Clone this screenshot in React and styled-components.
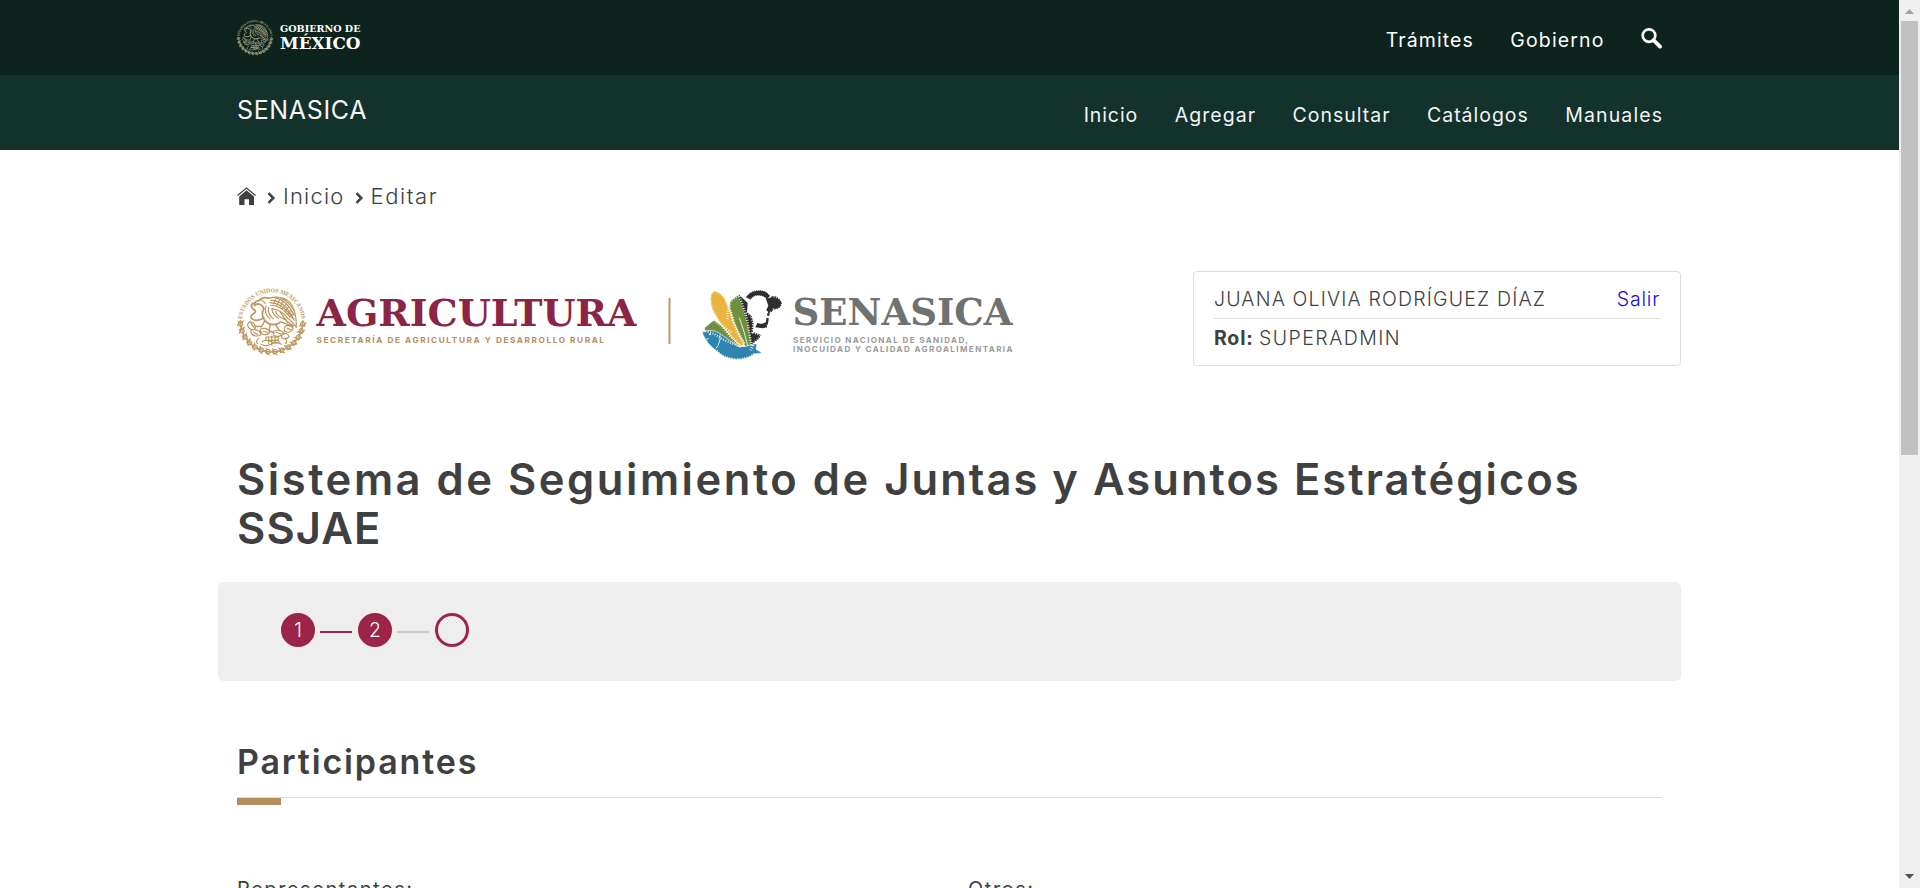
import React from 'react';
import styled, { createGlobalStyle } from 'styled-components';

const Global = createGlobalStyle`
  * { box-sizing: border-box; }
  body {
    margin: 0;
    overflow: hidden;
    background: #fff;
    color: #404041;
    font-family: Inter, "Open Sans", sans-serif;
  }
`;

const Window = styled.div`
  display: flex;
  height: 888px;
  overflow: hidden;
`;

const Page = styled.div`
  flex: 1;
  overflow: hidden;
`;

const Container = styled.div`
  width: 1463px;
  margin: 0 auto;
  padding: 0 19px;
`;

const Bar = styled.div`
  height: 75px;
  background: ${(p) => p.$bg};
`;

const BarContent = styled(Container)`
  display: flex;
  align-items: flex-start;
  justify-content: space-between;
`;

const Nav = styled.nav`
  display: flex;
  gap: 37.5px;
  line-height: 80px;
`;

const NavLink = styled.a`
  font-size: 19.5px;
  color: ${(p) => p.$color || '#fff'};
  letter-spacing: ${(p) => p.$track}px;
  margin-right: ${(p) => -p.$track}px;
`;

const SearchButton = styled.span`
  display: flex;
  padding-top: 27px;
  svg { display: block; }
`;

const Brand = styled.div`
  font-size: 25px;
  line-height: 70px;
  letter-spacing: 0.65px;
  color: #f4f6f5;
`;

const GobLogo = styled.svg`
  display: block;
  margin: 17px 0 0 -2px;
`;

const Breadcrumb = styled.div`
  display: flex;
  height: 92px;
  padding-top: 36px;
  line-height: 20px;
  font-size: 22px;
  font-weight: 300;
`;

const Crumb = styled.span`
  display: flex;
  letter-spacing: ${(p) => p.$track}px;
  svg { display: block; margin: 6px 7px 0 10px; }
`;

const HomeIcon = styled.svg`
  display: block;
  margin: 1px 1px 0 0;
`;

const Banner = styled.div`
  display: flex;
  justify-content: space-between;
  margin: 29px -19px 0 0;
  height: 95px;
`;

const Logos = styled.svg`
  display: block;
  margin-left: -7px;
`;

const UserCard = styled.div`
  width: 488px;
  height: 95px;
  padding: 8px 20px;
  border: 1px solid #ddd;
  border-radius: 4px;
  font-size: 19.5px;
  font-weight: 300;
`;

const UserRow = styled.div`
  display: flex;
  justify-content: space-between;
  line-height: 38px;
  height: 39px;
  border-bottom: ${(p) => (p.$line ? '1px solid #ddd' : 'none')};
`;

const Tracked = styled.span`
  letter-spacing: ${(p) => p.$track}px;
`;

const Strong = styled.b`
  font-weight: 700;
  letter-spacing: 0.8px;
`;

const Logout = styled.a`
  color: #0b0bd8;
  letter-spacing: 0.8px;
`;

const Title = styled.h1`
  margin: 88.5px 0 28.5px;
  font-size: 43.5px;
  line-height: 49.5px;
  font-weight: 600;
  white-space: nowrap;
`;

const Acronym = styled.span`
  display: block;
  letter-spacing: 1.1px;
`;

const Stepper = styled.div`
  display: flex;
  align-items: flex-start;
  height: 99px;
  margin: 0 -19px;
  padding: 31px 63px;
  background: #eee;
  border-radius: 6px;
`;

const Step = styled.span`
  display: flex;
  align-items: center;
  justify-content: center;
  width: 34px;
  height: 34px;
  border: 3px solid #9d2449;
  border-radius: 50%;
  background: ${(p) => (p.$done ? '#9d2449' : '#eee')};
  color: #fff;
  font-size: 19.5px;
  font-weight: 300;
`;

const StepLine = styled.span`
  width: 32px;
  height: 2px;
  margin: 18px 6px 0 5px;
  background: ${(p) => (p.$done ? '#9d2449' : '#ccc')};
`;

const SectionTitle = styled.h2`
  position: relative;
  margin: 60.5px 0 0;
  height: 56.5px;
  line-height: 40px;
  font-size: 34px;
  font-weight: 600;
  letter-spacing: 1.85px;
  border-bottom: 1px solid #ddd;
  &::after {
    content: '';
    position: absolute;
    left: 0;
    top: 56.5px;
    width: 44px;
    height: 7px;
    background: #b38e5d;
  }
`;

const Columns = styled.div`
  display: grid;
  grid-template-columns: 731px 1fr;
  margin-top: 77px;
`;

const Label = styled.label`
  font-size: 20px;
  line-height: 28px;
  letter-spacing: 1.55px;
`;

const Scrollbar = styled.div`
  display: flex;
  flex-direction: column;
  width: 21px;
  background: #f0f0f0;
`;

const Thumb = styled.div`
  height: 434px;
  width: 17px;
  margin: 0 2px auto;
  background: #c1c1c1;
`;

const Arrow = styled.svg`
  display: block;
  flex: none;
`;

const leaves = Array.from({ length: 14 }, (_, i) => 6 + i * 12.9);

/* National coat of arms, 240 units wide */
function Seal({ color, id }) {
  return (
    <g fill="none" stroke={color}>
      <path id={id} d="M33 124 A88 88 0 1 1 209 124" stroke="none" />
      <text fill={color} stroke="none" fontFamily="Liberation Serif" fontWeight="700" fontSize="17">
        <textPath href={`#${id}`} startOffset="50%" textAnchor="middle">ESTADOS UNIDOS MEXICANOS</textPath>
      </text>
      {leaves.map((a) => (
        <g key={a} transform={`rotate(${a} 121 119)`} strokeWidth="3.4">
          <path d="M212 110 q11 9 0 19 q-11 -9 0 -19z M202 128 q6 -8 17 -3 M222 114 q-5 8 -4 13 M212 114 v11" />
        </g>
      ))}
      <g strokeWidth="3.4" strokeLinecap="round" strokeLinejoin="round">
        {/* raised wing */}
        <path d="M112 54 Q150 42 176 68 Q194 92 193 139 Q180 120 168 112 Q150 88 122 84" />
        <path d="M118 60 Q158 58 187 118 M116 67 Q152 66 182 112 M118 74 Q148 74 174 108 M130 52 Q164 58 187 104 M146 52 Q172 64 188 92" />
        <path d="M132 58 l-5 12 M143 60 l-7 15 M153 65 l-8 15 M162 72 l-10 14 M170 80 l-10 13 M177 89 l-10 12 M183 99 l-9 9" />
        {/* head and body */}
        <path d="M112 54 Q96 48 84 60 Q70 62 70 75 L80 70 Q94 72 98 84 Q88 102 101 119 Q119 138 144 126" strokeWidth="5" />
        <path d="M90 58 q8 4 12 11 M104 76 q-6 22 12 38 M112 80 q-4 20 14 34 M122 84 q0 16 18 28 M132 92 q4 14 24 22 M146 94 l22 30 M154 112 l30 22 M146 122 l38 14" />
        {/* snake */}
        <path d="M66 68 Q56 78 68 86 Q80 92 66 100 Q54 108 66 116 Q80 122 98 111" strokeWidth="5" />
        {/* claws and cactus */}
        <path d="M101 119 l-10 18 l-19 -2 M117 131 l-4 17 l15 7 M132 131 l11 16" strokeWidth="4" />
        <path d="M56 122 q-12 11 3 22 q13 5 15 -5 q-1 -14 -18 -17z M60 149 q10 -8 25 1 q10 14 -7 14 q-17 0 -18 -15z M87 145 q17 -8 29 5 q-5 14 -23 8z M125 151 q19 -10 31 3 q-8 16 -29 9z M160 135 q15 -6 24 7 q-8 17 -26 8z M151 160 q17 -8 21 6 q-9 10 -22 3z" />
        <path d="M61 128 l8 11 M68 153 l12 7 M96 150 l13 4 M134 153 l15 5 M166 141 l12 5" />
        {/* stone, water and ribbon */}
        <path d="M104 167 h36 v10 h-36z M94 180 q12 -7 25 0 t26 0 M90 188 q14 8 28 0 t32 0 M112 167 v18 M121 164 v26 M131 167 v18" />
        <path d="M84 171 q-12 8 -4 15 M158 171 q11 8 4 15" />
      </g>
    </g>
  );
}

/* Corn, fish and bull emblem, 270 x 240 units */
function SenasicaMark() {
  return (
    <g>
      <path d="M121 30 L149 57 L147 84 L161 95 L167 120 L165 144 L190 153 L182 166 L168 176 L158 199 L139 163 L123 109z" fill="#302e2d" />
      <path d="M145 40 Q155 23 174 21 Q202 16 215 36 L208 44 Q194 32 177 34 Q165 35 158 46z" fill="#302e2d" stroke="#302e2d" strokeWidth="3" strokeDasharray="3 3" />
      <path d="M203 42 Q217 45 222 37 Q235 34 244 44 L252 56 Q250 73 236 75 Q226 75 222 84 Q208 87 205 78 L211 65z" fill="#302e2d" />
      <path d="M213 80 l-3 15 M209 102 l-3 20" stroke="#302e2d" strokeWidth="7" />
      <path d="M178 117 Q191 122 204 115 L208 130 L194 133 L172 130z" fill="#302e2d" />
      <path d="M20 132 L48 109 Q74 128 102 145 Q125 160 139 178 L132 190 Q103 188 71 165 Q50 147 22 141z" fill="#6f9041" />
      <path d="M120 34 L98 50 L89 82 L88 105 Q111 140 134 174 L149 194 L160 184 Q158 153 147 115 Q139 77 120 34z" fill="#6f9041" />
      <path d="M124 101 Q140 145 150 189" stroke="#fff" strokeWidth="2.5" fill="none" />
      <path d="M46 20 Q65 19 81 43 Q96 72 106 112 Q121 150 139 179 L130 187 Q106 170 82 137 Q57 110 41 74 Q29 33 46 20z" fill="#eab440" stroke="#fff" strokeWidth="2.5" />
      <path d="M13 144 Q42 133 65 148 Q96 171 121 187 Q144 191 162 181 L177 179 L174 196 L193 207 L169 210 Q149 227 114 227 Q74 223 56 201 Q27 180 15 152z" fill="#2d84af" stroke="#fff" strokeWidth="2" />
      <g stroke="#fff" fill="none" strokeDasharray="2.5 5">
        <path d="M46 20 Q65 19 81 43 Q96 72 106 112 Q121 150 139 179 M130 187 Q106 170 82 137 Q57 110 41 74 Q29 33 46 20" strokeWidth="9" />
        <path d="M121 33 L98 50 L89 82 L88 105 M121 30 Q139 71 149 115 L160 184 M48 109 Q74 128 102 145 M22 141 Q50 147 71 165 L131 190" strokeWidth="7" />
        <path d="M147 84 L161 95 L167 120 L165 144 L190 153 L182 166 L168 176 L158 199 M56 201 Q74 223 114 227 Q149 227 169 210" strokeWidth="9" />
        <path d="M207 85 Q225 86 226 76 Q254 76 251 52 L244 44 L222 36" strokeWidth="5" />
      </g>
      <circle cx="36" cy="151" r="3" fill="#fff" />
      <path d="M66 151 Q68 177 54 193 M22 166 l10 -2" stroke="#fff" strokeWidth="2.5" fill="none" />
    </g>
  );
}

const slab = { fontFamily: 'DejaVu Serif', fontWeight: 700, lengthAdjust: 'spacingAndGlyphs' };
const sans = { fontFamily: 'Inter', fontWeight: 700, lengthAdjust: 'spacing' };

function GobiernoLogo() {
  return (
    <GobLogo width="130" height="42" viewBox="235 17 130 42">
      <g transform="translate(233.2 15.6) scale(0.18)">
        <Seal color="#b0a985" id="arc-small" />
      </g>
      <g fill="#fff">
        <text x="280" y="32" fontSize="9.4" textLength="80.5" {...slab}>GOBIERNO DE</text>
        <text x="280" y="49" fontSize="16.2" textLength="80.5" {...slab}>MÉXICO</text>
      </g>
    </GobLogo>
  );
}

function InstitutionLogos() {
  return (
    <Logos width="800" height="95" viewBox="230 271 800 95">
      <g transform="translate(230.3 279.9) scale(0.342)">
        <Seal color="#bc955c" id="arc-large" />
      </g>
      <text x="316.5" y="326" fontSize="37.8" textLength="320" fill="#8a2545" {...slab}>AGRICULTURA</text>
      <text x="316.5" y="343.4" fontSize="8.2" textLength="287.5" fill="#b38e5d" {...sans}>SECRETARÍA DE AGRICULTURA Y DESARROLLO RURAL</text>
      <rect x="668.5" y="298" width="2" height="46" fill="#b89a66" />
      <g transform="translate(698 284) scale(0.3333)">
        <SenasicaMark />
      </g>
      <text x="792.5" y="325" fontSize="37" textLength="220" fill="#6f7271" {...slab}>SENASICA</text>
      <g fill="#98999b">
        <text x="793" y="342.8" fontSize="8" textLength="175" {...sans}>SERVICIO NACIONAL DE SANIDAD,</text>
        <text x="793" y="352.3" fontSize="8" textLength="219.5" {...sans}>INOCUIDAD Y CALIDAD AGROALIMENTARIA</text>
      </g>
    </Logos>
  );
}

function Chevron() {
  return (
    <svg width="9" height="12" viewBox="0 0 9 12">
      <path d="M1.5 1.2 L6.3 6 L1.5 10.8" fill="none" stroke="#404041" strokeWidth="2.5" />
    </svg>
  );
}

const sections = [
  ['Inicio', 0.9],
  ['Agregar', 1.05],
  ['Consultar', 0.98],
  ['Catálogos', 0.98],
  ['Manuales', 1.1],
];

export default function App() {
  return (
    <Window>
      <Global />
      <Page>
        <Bar $bg="#0c231e">
          <BarContent>
            <GobiernoLogo />
            <Nav>
              <NavLink $track={1.1}>Trámites</NavLink>
              <NavLink $track={1.15}>Gobierno</NavLink>
              <SearchButton>
                <svg width="21" height="22" viewBox="0 0 21 22">
                  <circle cx="8" cy="8.6" r="6.3" fill="none" stroke="#fff" strokeWidth="2.7" />
                  <path d="M12.5 13.2 L19 19.6" stroke="#fff" strokeWidth="3.8" strokeLinecap="round" />
                </svg>
              </SearchButton>
            </Nav>
          </BarContent>
        </Bar>
        <Bar $bg="#13322b">
          <BarContent>
            <Brand>SENASICA</Brand>
            <Nav>
              {sections.map(([name, track]) => (
                <NavLink key={name} $track={track} $color="#f1f4f3">{name}</NavLink>
              ))}
            </Nav>
          </BarContent>
        </Bar>
        <Container>
          <Breadcrumb>
            <HomeIcon width="19" height="18" viewBox="0 0 19 18">
              <path d="M0.5 8.5 L9.5 1 L18.5 8.5" fill="none" stroke="#404041" strokeWidth="1.2" />
              <path d="M9.5 3.2 L17 9.4 V18 H12 V12.2 H7.5 V18 H2.2 V9.4z" fill="#404041" />
            </HomeIcon>
            <Crumb $track={1.2}><Chevron />Inicio</Crumb>
            <Crumb $track={1.6}><Chevron />Editar</Crumb>
          </Breadcrumb>
          <Banner>
            <InstitutionLogos />
            <UserCard>
              <UserRow $line>
                <Tracked $track={1.17}>JUANA OLIVIA RODRÍGUEZ DÍAZ</Tracked>
                <Logout>Salir</Logout>
              </UserRow>
              <UserRow>
                <span><Strong>Rol:</Strong> <Tracked $track={1.45}>SUPERADMIN</Tracked></span>
              </UserRow>
            </UserCard>
          </Banner>
          <Title>
            <Tracked $track={2.53}>Sistema de Seguimiento de </Tracked>
            <Tracked $track={2.03}>Juntas y Asuntos Estratégicos</Tracked>
            <Acronym>SSJAE</Acronym>
          </Title>
          <Stepper>
            <Step $done>1</Step>
            <StepLine $done />
            <Step $done>2</Step>
            <StepLine />
            <Step />
          </Stepper>
          <SectionTitle>Participantes</SectionTitle>
          <Columns>
            <Label>Representantes:</Label>
            <Label>Otros:</Label>
          </Columns>
        </Container>
      </Page>
      <Scrollbar>
        <Arrow width="21" height="21" viewBox="0 0 21 21">
          <path d="M6 14 L10.5 9 L15 14z" fill="#a3a3a3" />
        </Arrow>
        <Thumb />
        <Arrow width="21" height="21" viewBox="0 0 21 21">
          <path d="M6 7 L10.5 12 L15 7z" fill="#505050" />
        </Arrow>
      </Scrollbar>
    </Window>
  );
}
